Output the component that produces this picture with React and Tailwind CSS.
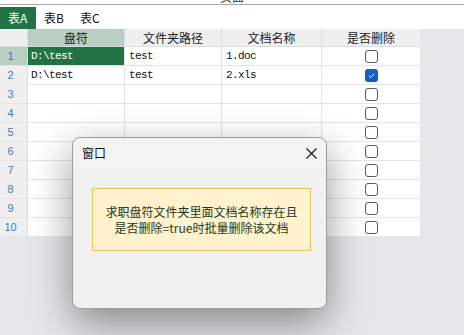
import React from "react";

const cjk = { fontFamily: '"Noto Sans CJK SC", "Liberation Sans", sans-serif' };
const mono = { fontFamily: '"Liberation Mono", "Noto Sans CJK SC", monospace' };

function Checkbox({ checked }) {
  if (checked) {
    return (
      <div className="w-[13px] h-[13px] rounded-[3px] bg-[#0f5fc4] flex items-center justify-center">
        <svg width="9" height="9" viewBox="0 0 9 9">
          <path d="M2 4.8 L3.8 6.4 L7 2.8" fill="none" stroke="#ffffff" strokeWidth="1" />
        </svg>
      </div>
    );
  }
  return <div className="w-[13px] h-[13px] rounded-[3px] border border-[#5a5a5a] bg-white" />;
}

const rows = [
  { a: "D:\\test", b: "test", c: "1.doc", d: false },
  { a: "D:\\test", b: "test", c: "2.xls", d: true },
  {}, {}, {}, {}, {}, {}, {}, {},
];

export default function App() {
  return (
    <div className="relative w-[464px] h-[335px] overflow-hidden bg-[#e6e7e9]" style={cjk}>
      {/* top clipped title */}
      <div className="relative h-[5px] bg-white border-b border-[#a8a8a8] overflow-hidden">
        <div className="absolute left-0 right-0 top-[-11px] text-center text-[12px] leading-[15px] text-[#333]">页面</div>
      </div>
      {/* tabs */}
      <div className="flex items-end h-[24px] bg-white">
        <div className="w-[36px] h-[22px] bg-[#217346] text-white text-[12px] pl-[8px] flex items-center">表A</div>
        <div className="w-[36px] h-[22px] text-[#111] text-[12px] pl-[8px] flex items-center">表B</div>
        <div className="w-[36px] h-[22px] text-[#111] text-[12px] pl-[8px] flex items-center">表C</div>
      </div>
      {/* grid */}
      <div className="w-[420px] bg-white">
        <div className="flex h-[18px] bg-[#efefef] border-b border-[#dcdcdc] text-[12px] text-[#222]">
          <div className="w-[28px] border-r border-[#dcdcdc]" />
          <div className="w-[97px] bg-[#b6cfc0] border-r border-[#dcdcdc] flex items-center justify-center">盘符</div>
          <div className="w-[97px] border-r border-[#dcdcdc] flex items-center justify-center">文件夹路径</div>
          <div className="w-[100px] border-r border-[#dcdcdc] flex items-center justify-center">文档名称</div>
          <div className="w-[98px] flex items-center justify-center">是否删除</div>
        </div>
        {rows.map((r, i) => (
          <div key={i} className="flex h-[19px] border-b border-[#e4e4e4]">
            <div
              className={
                "w-[28px] border-r border-[#dcdcdc] flex items-center justify-center pr-[6px] text-[11px] text-[#3d7bb9] " +
                (i === 0 ? "bg-[#b6cfc0]" : "bg-[#efefef]")
              }
              style={{ fontFamily: '"Liberation Sans", sans-serif' }}
            >
              {i + 1}
            </div>
            <div
              className={
                "w-[97px] border-r border-[#e4e4e4] flex items-center pl-[3px] text-[11px] tracking-[-0.6px] " +
                (i === 0 ? "bg-[#217346] text-white" : "text-[#111]")
              }
              style={mono}
            >
              {r.a}
            </div>
            <div className="w-[97px] border-r border-[#e4e4e4] flex items-center pl-[4px] text-[11px] tracking-[-0.6px] text-[#111]" style={mono}>
              {r.b}
            </div>
            <div className="w-[100px] border-r border-[#e4e4e4] flex items-center pl-[4px] text-[11px] tracking-[-0.6px] text-[#111]" style={mono}>
              {r.c}
            </div>
            <div className="w-[98px] flex items-center justify-center">
              <Checkbox checked={r.d === true} />
            </div>
          </div>
        ))}
      </div>

      {/* dialog */}
      <div className="absolute left-[72px] top-[137px] w-[255px] h-[172px] rounded-[8px] bg-[#f0f0f0] border border-[#9c9c9c] shadow-[0_14px_40px_rgba(0,0,0,0.42)] flex flex-col">
        <div className="h-[30px] flex items-center justify-between pl-[9px] pr-[9px] rounded-t-[8px] bg-[#f3f3f3]">
          <span className="text-[12px] text-[#111]">窗口</span>
          <svg width="11" height="11" viewBox="0 0 11 11">
            <path d="M0.5 0.5 L10.5 10.5 M10.5 0.5 L0.5 10.5" stroke="#111" strokeWidth="1.1" />
          </svg>
        </div>
        <div className="ml-[19px] mt-[20px] w-[219px] h-[63px] bg-[#fff2cd] border border-[#e9c15d] flex flex-col items-center justify-center text-[12px] leading-[16px] text-[#1c3a22]">
          <div>求职盘符文件夹里面文档名称存在且</div>
          <div>是否删除=true时批量删除该文档</div>
        </div>
      </div>
    </div>
  );
}
